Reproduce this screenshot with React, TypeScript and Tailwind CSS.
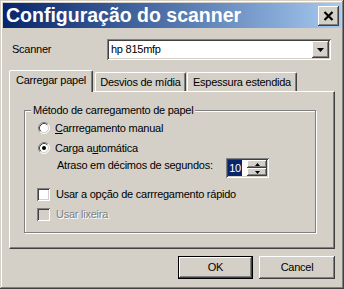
import type { ReactNode } from "react";

// classic 3D bevels
const raised =
  "shadow-[inset_-1px_-1px_#404040,inset_1px_1px_#ffffff,inset_-2px_-2px_#808080,inset_2px_2px_#d4d0c8]";
const sunken =
  "shadow-[inset_1px_1px_#808080,inset_-1px_-1px_#ffffff,inset_2px_2px_#404040,inset_-2px_-2px_#d4d0c8]";

function Radio({ checked }: { checked?: boolean }) {
  return (
    <svg width="12" height="12" viewBox="0 0 12 12" className="shrink-0">
      <circle cx="6" cy="6" r="5" fill="#ffffff" />
      <path d="M2.11 9.89 A5.5 5.5 0 0 1 9.89 2.11" fill="none" stroke="#808080" strokeWidth="1" />
      <path d="M9.89 2.11 A5.5 5.5 0 0 1 2.11 9.89" fill="none" stroke="#ffffff" strokeWidth="1" />
      <path d="M2.82 9.18 A4.5 4.5 0 0 1 9.18 2.82" fill="none" stroke="#404040" strokeWidth="1" />
      <path d="M9.18 2.82 A4.5 4.5 0 0 1 2.82 9.18" fill="none" stroke="#d4d0c8" strokeWidth="1" />
      {checked && <circle cx="6" cy="6" r="2" fill="#000000" />}
    </svg>
  );
}

function Check({ disabled }: { disabled?: boolean }) {
  return (
    <div
      className={`h-[13px] w-[13px] shrink-0 ${sunken} ${disabled ? "bg-[#d4d0c8]" : "bg-white"}`}
    />
  );
}

function Row({ children, className = "" }: { children: ReactNode; className?: string }) {
  return <div className={`flex h-[20px] items-center pl-[12px] ${className}`}>{children}</div>;
}

function Tab({ label, active, className = "" }: { label: string; active?: boolean; className?: string }) {
  return (
    <div
      className={`flex items-start justify-center rounded-t-[2px] border-l border-t border-r border-white border-r-[#404040] bg-[#d4d0c8] shadow-[inset_-1px_0_#808080] ${
        active ? "relative z-10 -mb-px h-[22px] pt-[3px]" : "h-[19px] pt-[3px]"
      } ${className}`}
    >
      <span className="leading-[13px]">{label}</span>
    </div>
  );
}

export default function App() {
  return (
    <div
      className={`flex h-[289px] w-[344px] flex-col bg-[#d4d0c8] p-[3px] font-['Liberation_Sans',Arial,sans-serif] text-[11px] tracking-[-0.25px] text-black shadow-[inset_-1px_-1px_#404040,inset_1px_1px_#d4d0c8,inset_-2px_-2px_#808080,inset_2px_2px_#ffffff]`}
    >
      {/* title bar */}
      <div className="flex h-[25px] items-center justify-between bg-linear-to-r from-[#0a246a] to-[#a6caf0] pl-[3px] pr-[2px]">
        <span className="text-[19.5px] font-bold leading-none tracking-normal text-white">
          Configuração do scanner
        </span>
        <div className={`flex h-[20px] w-[21px] items-center justify-center bg-[#d4d0c8] ${raised}`}>
          <svg width="11" height="10" viewBox="0 0 11 10">
            <path d="M1.5 1 L9.5 9 M9.5 1 L1.5 9" stroke="#000" strokeWidth="2.2" />
          </svg>
        </div>
      </div>

      <div className="flex flex-col px-[6px]">
        {/* scanner select */}
        <div className="mt-[11px] flex h-[21px] items-center">
          <span className="w-[98px] pl-[3px]">Scanner</span>
          <div className={`flex h-[21px] w-[224px] items-center bg-white p-[2px] ${sunken}`}>
            <span className="flex-1 pl-[2px]">hp 815mfp</span>
            <div className={`flex h-[17px] w-[17px] items-center justify-center bg-[#d4d0c8] ${raised}`}>
              <svg width="7" height="4" viewBox="0 0 7 4">
                <path d="M0 0 H7 L3.5 4 Z" fill="#000" />
              </svg>
            </div>
          </div>
        </div>

        {/* tabs */}
        <div className="mt-[10px] flex items-end">
          <Tab label="Carregar papel" active className="w-[84px]" />
          <Tab label="Desvios de mídia" className="ml-[2px] w-[91px]" />
          <Tab label="Espessura estendida" className="ml-[1px] w-[110px]" />
        </div>

        <div className="h-[158px] border border-white border-r-[#404040] border-b-[#404040] shadow-[inset_-1px_-1px_#808080]">
          <div className="relative ml-[14px] mt-[18px] h-[123px] w-[292px] border border-[#808080] shadow-[inset_1px_1px_#ffffff,1px_1px_#ffffff]">
            <span className="absolute left-[6px] top-[-7px] bg-[#d4d0c8] px-[2px] leading-[13px]">
              Método de carregamento de papel
            </span>
            <div className="flex flex-col pt-[7px]">
              <Row>
                <span className="ml-[1px]">
                  <Radio />
                </span>
                <span className="ml-[5px]">
                  <u>C</u>arrregamento manual
                </span>
              </Row>
              <Row>
                <span className="ml-[1px]">
                  <Radio checked />
                </span>
                <span className="ml-[5px]">
                  Carga a<u>u</u>tomática
                </span>
              </Row>
              <div className="flex h-[20px] items-center pl-[32px]">
                <span className="w-[169px] pb-[5px]">Atraso em décimos de segundos:</span>
                <div className={`flex h-[20px] w-[43px] bg-white p-[2px] ${sunken}`}>
                  <span className="flex h-[16px] w-[14px] items-center justify-center bg-[#0a246a] leading-none text-white">
                    10
                  </span>
                  <div className="ml-auto flex w-[20px] flex-col">
                    <div className={`flex h-[8px] items-center justify-center bg-[#d4d0c8] ${raised}`}>
                      <svg width="5" height="3" viewBox="0 0 5 3">
                        <path d="M2.5 0 L5 3 H0 Z" fill="#000" />
                      </svg>
                    </div>
                    <div className={`flex h-[8px] items-center justify-center bg-[#d4d0c8] ${raised}`}>
                      <svg width="5" height="3" viewBox="0 0 5 3">
                        <path d="M0 0 H5 L2.5 3 Z" fill="#000" />
                      </svg>
                    </div>
                  </div>
                </div>
              </div>
              <Row className="mt-[6px]">
                <Check />
                <span className="ml-[6px]">Usar a opção de carrregamento rápido</span>
              </Row>
              <Row>
                <Check disabled />
                <span className="ml-[6px] text-[#808080] [text-shadow:1px_1px_0_#ffffff]">Usar lixeira</span>
              </Row>
            </div>
          </div>
        </div>

        {/* buttons */}
        <div className="mt-[7px] flex justify-end gap-[6px]">
          <div className="h-[23px] w-[75px] border border-black">
            <div className={`flex h-full items-center justify-center bg-[#d4d0c8] ${raised}`}>OK</div>
          </div>
          <div className={`flex h-[23px] w-[76px] items-center justify-center bg-[#d4d0c8] ${raised}`}>
            Cancel
          </div>
        </div>
      </div>
    </div>
  );
}
